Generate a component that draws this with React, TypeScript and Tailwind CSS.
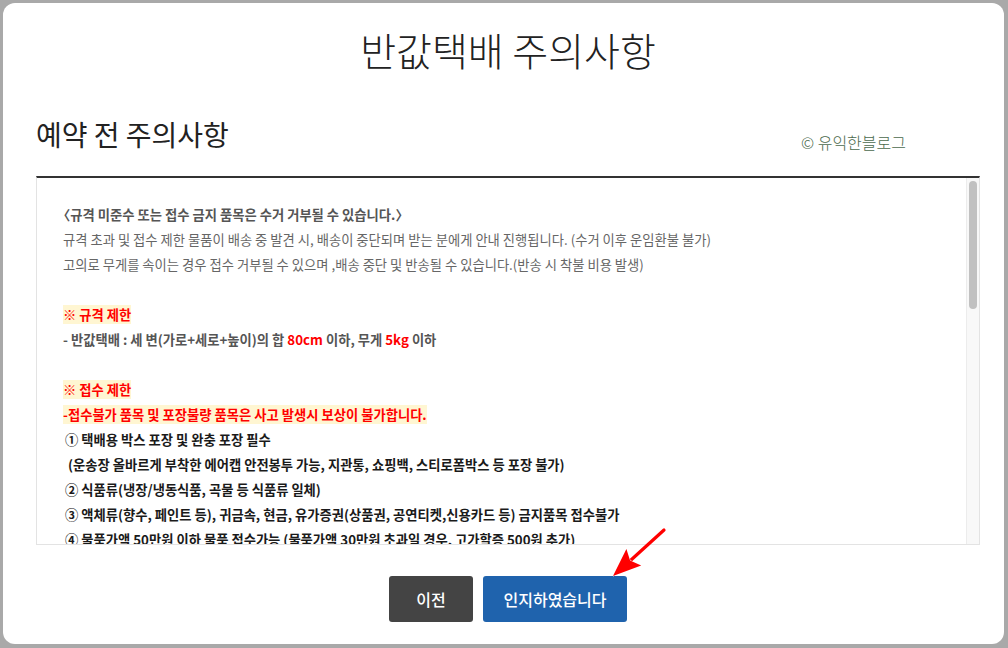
import { ReactNode } from "react"

const font = { fontFamily: '"Noto Sans CJK KR", "Noto Sans", sans-serif' }

function Mark({ children }: { children: ReactNode }) {
  return <span className="bg-[#fff6d2] font-bold text-[#ff0000]">{children}</span>
}

function Red({ children }: { children: ReactNode }) {
  return <span className="text-[#ff0000]">{children}</span>
}

function Arrow() {
  return (
    <svg className="absolute left-[597px] top-[517px]" width="70" height="65" viewBox="0 0 70 65">
      <line x1="64" y1="10" x2="31" y2="40" stroke="#ff0000" strokeWidth="3.2" strokeLinecap="round" />
      <polygon
        points="13,56 26.4,29 30.1,40.6 41.2,45.4"
        fill="#ff0000"
        stroke="#ffffff"
        strokeWidth="1"
        strokeLinejoin="round"
        paintOrder="stroke"
      />
    </svg>
  )
}

export default function App() {
  return (
    <div className="h-[648px] w-[1008px] bg-[#a9a9a9] pb-[4px] pl-[3px] pr-[4px] pt-[3px]" style={font}>
      <div className="relative flex h-full flex-col rounded-[12px] bg-white pl-[33px] pr-[24px]">
        <h1 className="mt-[23px] text-center text-[39px] font-light leading-[46px] text-[#222]">반값택배 주의사항</h1>

        <div className="mt-[45px] flex items-end justify-between">
          <h2 className="text-[28px] leading-[34px] text-[#222]">예약 전 주의사항</h2>
          <span className="mb-[-1px] mr-[74px] text-[16px] font-light leading-[20px] text-[#4b6a4d]">© 유익한블로그</span>
        </div>

        <div className="mt-[25px] flex h-[369px] border-x border-b border-t-2 border-[#e3e3e3] border-t-[#333]">
          <div className="flex-1 overflow-hidden pl-[26px] pt-[24px] text-[13.3px] leading-[25px] text-[#666]">
            <p className="font-bold text-[#555]">
              <span className="-ml-[6px]">〈</span>규격 미준수 또는 접수 금지 품목은 수거 거부될 수 있습니다.〉
            </p>
            <p>규격 초과 및 접수 제한 물품이 배송 중 발견 시, 배송이 중단되며 받는 분에게 안내 진행됩니다. (수거 이후 운임환불 불가)</p>
            <p>고의로 무게를 속이는 경우 접수 거부될 수 있으며 ,배송 중단 및 반송될 수 있습니다.(반송 시 착불 비용 발생)</p>
            <p>&nbsp;</p>
            <p><Mark>※ 규격 제한</Mark></p>
            <p className="font-bold text-[#555]">
              - 반값택배 : 세 변(가로+세로+높이)의 합 <Red>80cm</Red> 이하, 무게 <Red>5kg</Red> 이하
            </p>
            <p>&nbsp;</p>
            <p><Mark>※ 접수 제한</Mark></p>
            <p><Mark>-접수불가 품목 및 포장불량 품목은 사고 발생시 보상이 불가합니다.</Mark></p>
            <div className="pl-[2px] font-bold text-[#1a1a1a]">
              <p>① 택배용 박스 포장 및 완충 포장 필수</p>
              <p>&nbsp;(운송장 올바르게 부착한 에어캡 안전봉투 가능, 지관통, 쇼핑백, 스티로폼박스 등 포장 불가)</p>
              <p>② 식품류(냉장/냉동식품, 곡물 등 식품류 일체)</p>
              <p>③ 액체류(향수, 페인트 등), 귀금속, 현금, 유가증권(상품권, 공연티켓,신용카드 등) 금지품목 접수불가</p>
              <p>④ 물품가액 50만원 이하 물품 접수가능 (물품가액 30만원 초과일 경우, 고가할증 500원 추가)</p>
              <p>⑤ 위험물(가스, 인화성 물질, 배터리 등) 및 동물, 식물 접수불가</p>
            </div>
          </div>
          <div className="w-[13px] border-l border-[#ececec] bg-[#f8f8f8] px-[2px] pt-[3px]">
            <div className="h-[128px] rounded-full bg-[#c1c1c1]" />
          </div>
        </div>

        <div className="mt-[31px] flex justify-center gap-[10px]">
          <button className="h-[46px] w-[84px] rounded-[3px] bg-[#444] text-[16px] font-medium text-white">이전</button>
          <button className="h-[46px] w-[144px] rounded-[3px] bg-[#1f63ad] text-[16px] font-medium text-white">인지하였습니다</button>
        </div>

        <Arrow />
      </div>
    </div>
  )
}
